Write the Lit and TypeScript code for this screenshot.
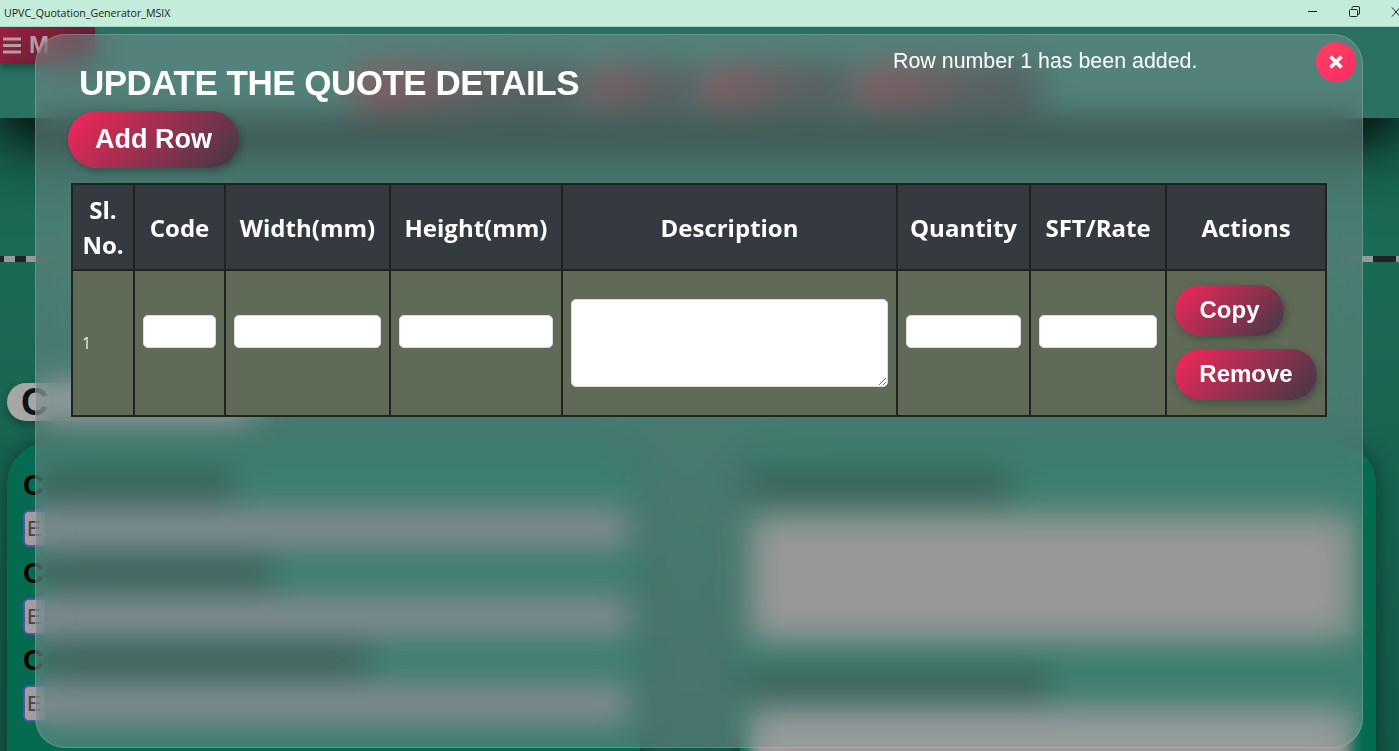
import { LitElement, html, css } from "lit";
import { customElement } from "lit/decorators.js";

const COLUMNS = [
  { label: "Sl. No.", width: 62 },
  { label: "Code", width: 91 },
  { label: "Width(mm)", width: 165 },
  { label: "Height(mm)", width: 172 },
  { label: "Description", width: 335 },
  { label: "Quantity", width: 133 },
  { label: "SFT/Rate", width: 136 },
  { label: "Actions", width: 160 },
];

const LEFT_FIELDS = [185, 225, 320];

@customElement("app-root")
export class AppRoot extends LitElement {
  static styles = css`
    :host { display: block; width: 1399px; height: 751px; overflow: hidden; position: relative; font-family: "Liberation Sans", Arial, sans-serif; background: #1a6350; }
    .titlebar { height: 26px; background: #c3ecda; border-bottom: 1px solid #a9d6c4; display: flex; align-items: center; padding-left: 4px; font-family: "Open Sans", "Noto Sans", sans-serif; font-size: 10.6px; color: #222; overflow: hidden; }
    .title-text { flex: 1; }
    .winbtns { display: flex; align-items: center; flex: none; width: 94px; height: 26px; }
    .winbtns svg { flex: none; overflow: visible; }
    .page { height: 724px; display: flex; flex-direction: column; overflow: hidden; background: linear-gradient(180deg, #155a49 0%, #1a6a56 30%, #145a4a 100%); }
    .app-header { height: 91px; flex: none; background: #2a7163; box-shadow: 0 22px 60px #000; position: relative; z-index: 1; display: flex; align-items: flex-start; }
    .menu { width: 95px; height: 36px; background: linear-gradient(135deg, #9c1f3e, #4e2030); border-radius: 0 0 12px 0; color: #b59ca0; font-weight: 700; font-size: 24px; display: flex; align-items: center; gap: 7px; padding-left: 3px; box-sizing: border-box; box-shadow: 0 4px 8px rgba(0,0,0,.4); }
    .menu svg { flex: none; }
    .nav { display: flex; margin: 38px 0 0 255px; filter: blur(6px); }
    .nav span { height: 46px; background: linear-gradient(135deg, #9a2a36 0%, #2f3538 70%); border-radius: 23px; }
    .nav .n1 { width: 235px; }
    .nav .n2 { width: 115px; }
    .nav .n3 { width: 155px; }
    .nav .n4 { width: 190px; }
    .divider { flex: none; margin-top: 138px; height: 6px; background: linear-gradient(90deg, #222 0 4px, #999 4px 15px, #222 15px 26px, #999 26px 36px, #555 36px 1362px, #999 1362px 1373px, #222 1373px 1396px, #999 1396px); }
    .pill { flex: none; margin: 121px 0 0 7px; width: 250px; height: 38px; border-radius: 19px; background: #a6a6a6; color: #111; font-size: 38px; font-weight: 700; padding-left: 14px; box-sizing: border-box; line-height: 38px; box-shadow: 0 4px 8px rgba(0,0,0,.3); }
    .cards { flex: none; margin: 22px 23px 0 7px; display: grid; grid-template-columns: 633px 636px; justify-content: space-between; }
    .card { height: 420px; background: #056b50; border-radius: 40px; box-shadow: 0 0 20px rgba(0,0,0,.45); box-sizing: border-box; }
    .card.left { padding: 27px 10px 0 16px; }
    .card.right { padding: 27px 26px 0 10px; }
    .fieldlabel { height: 30px; color: #000; font-size: 29px; font-weight: 700; line-height: 30px; display: flex; align-items: center; gap: 4px; }
    .ghost { flex: none; height: 20px; background: rgba(0,0,0,.75); filter: blur(5px); }
    .field { height: 37px; margin: 10px 0 10.5px; display: flex; }
    .cap { flex: none; width: 22px; box-sizing: border-box; border: 2px solid #4a55b0; border-right: 0; border-radius: 6px 0 0 6px; background: #a09ca2; color: #444; font-size: 22px; line-height: 33px; padding-left: 2px; }
    .rest { flex: 1; background: #88808f; filter: blur(5px); }
    .bigfield { height: 125px; background: #a19593; margin: 15px 0 30px; filter: blur(7px); }
    .bigfield2 { height: 80px; background: #a19a9c; margin-top: 8px; filter: blur(7px); }

    .modal { position: absolute; left: 35px; top: 34px; width: 1328px; height: 714px; box-sizing: border-box; border-radius: 30px; background: rgba(140,155,158,.41); backdrop-filter: blur(16px); border: 1px solid rgba(255,255,255,.16); color: #fff; padding: 29px 32px 0 32px; z-index: 5; }
    h2 { margin: 0 0 0 11px; font-size: 35px; letter-spacing: -.5px; line-height: 38px; font-weight: 700; color: #fff; }
    .toast { position: absolute; top: 13px; left: 857px; font-size: 21.4px; line-height: 26px; white-space: nowrap; }
    .close { position: absolute; top: 7px; right: 6px; width: 40px; height: 40px; border-radius: 50%; border: 0; padding: 0; background: linear-gradient(135deg, #ff4060, #f92d66); color: #fff; display: grid; place-items: center; }
    .btn { border: 0; padding: 0; color: #fff; font-family: "Liberation Sans", Arial, sans-serif; font-weight: 700; background: linear-gradient(135deg, #f8265a 0%, #3d3a46 100%); box-shadow: 2px 3px 8px rgba(0,0,0,.28); display: block; }
    .add { margin: 9px 0 0 0; width: 171px; height: 57px; border-radius: 29px; font-size: 27px; }
    table { margin: 15px 0 0 3px; border-collapse: collapse; table-layout: fixed; width: 1254px; }
    th, td { border: 2px solid #222; padding: 8px; }
    th { height: 86px; box-sizing: border-box; background: #343a40; color: #fff; font-family: "Open Sans", "Noto Sans", sans-serif; font-weight: 700; font-size: 24px; line-height: 35px; padding-top: 4px; padding-bottom: 4px; text-align: center; vertical-align: middle; }
    td { height: 146px; box-sizing: border-box; background: #5f6b57; font-size: 16px; color: #eee; vertical-align: middle; font-family: "Open Sans", sans-serif; }
    input { display: block; box-sizing: border-box; width: 100%; height: 33px; border: 1px solid #ddd; border-radius: 5px; background: #fff; padding: 0; margin: 0 0 24px; }
    textarea { display: block; box-sizing: border-box; width: 100%; height: 88px; border: 1px solid #ddd; border-radius: 5px; background: #fff; padding: 0; margin: 0; }
    .actions { display: flex; flex-direction: column; align-items: flex-start; gap: 13px; margin-bottom: 2px; }
    .copy, .remove { height: 51px; border-radius: 26px; font-size: 24px; }
    .copy { width: 109px; }
    .remove { width: 142px; }
    .no { padding-left: 9px; }
  `;

  render() {
    return html`
      <div class="titlebar">
        <span class="title-text">UPVC_Quotation_Generator_MSIX</span>
        <div class="winbtns">
          <svg width="42" height="26" viewBox="0 0 42 26"><path d="M3 11.500h9" stroke="#222" fill="none"/></svg>
          <svg width="42" height="26" viewBox="0 0 42 26"><path d="M3.500 9.500h6a1 1 0 0 1 1 1v5a1 1 0 0 1-1 1h-6a1 1 0 0 1-1-1v-5a1 1 0 0 1 1-1zM5 8.500V8a1.500 1.500 0 0 1 1.500-1.500h4.500a1.500 1.500 0 0 1 1.500 1.500v5a1.500 1.500 0 0 1-1.500 1.500" stroke="#222" fill="none"/></svg>
          <svg width="10" height="26" viewBox="0 0 10 26"><path d="M3 7.500l8 9M11 7.500l-8 9" stroke="#222" fill="none"/></svg>
        </div>
      </div>
      <div class="page">
        <div class="app-header">
          <div class="menu">
            <svg width="19" height="17" viewBox="0 0 19 17"><path d="M0 2h18M0 8.500h18M0 15h18" stroke="#b59ca0" stroke-width="3"/></svg>
            <span>M</span>
          </div>
          <div class="nav">
            <span class="n1"></span><span class="n2"></span><span class="n3"></span><span class="n4"></span>
          </div>
        </div>
        <div class="divider"></div>
        <div class="pill">C</div>
        <div class="cards">
          <div class="card left">
            ${LEFT_FIELDS.map(
              (w) => html`
                <div class="fieldlabel"><span>C</span><span class="ghost" style="width:${w}px"></span></div>
                <div class="field"><div class="cap">E</div><div class="rest"></div></div>
              `
            )}
          </div>
          <div class="card right">
            <div class="fieldlabel"><span class="ghost" style="width:260px"></span></div>
            <div class="bigfield"></div>
            <div class="fieldlabel"><span class="ghost" style="width:300px"></span></div>
            <div class="bigfield2"></div>
          </div>
        </div>
      </div>
      <div class="modal">
        <div class="toast">Row number 1 has been added.</div>
        <button class="close" aria-label="Close">
          <svg width="16" height="16" viewBox="0 0 16 16"><path d="M2.500 2.500l11 11M13.500 2.500l-11 11" stroke="#fff" stroke-width="3.600"/></svg>
        </button>
        <h2>UPDATE THE QUOTE DETAILS</h2>
        <button class="btn add">Add Row</button>
        <table>
          <colgroup>${COLUMNS.map((c) => html`<col style="width:${c.width}px" />`)}</colgroup>
          <thead><tr>${COLUMNS.map((c) => html`<th>${c.label}</th>`)}</tr></thead>
          <tbody>
            <tr>
              <td class="no">1</td>
              <td><input /></td>
              <td><input /></td>
              <td><input /></td>
              <td><textarea></textarea></td>
              <td><input /></td>
              <td><input /></td>
              <td>
                <div class="actions">
                  <button class="btn copy">Copy</button>
                  <button class="btn remove">Remove</button>
                </div>
              </td>
            </tr>
          </tbody>
        </table>
      </div>
    `;
  }
}
